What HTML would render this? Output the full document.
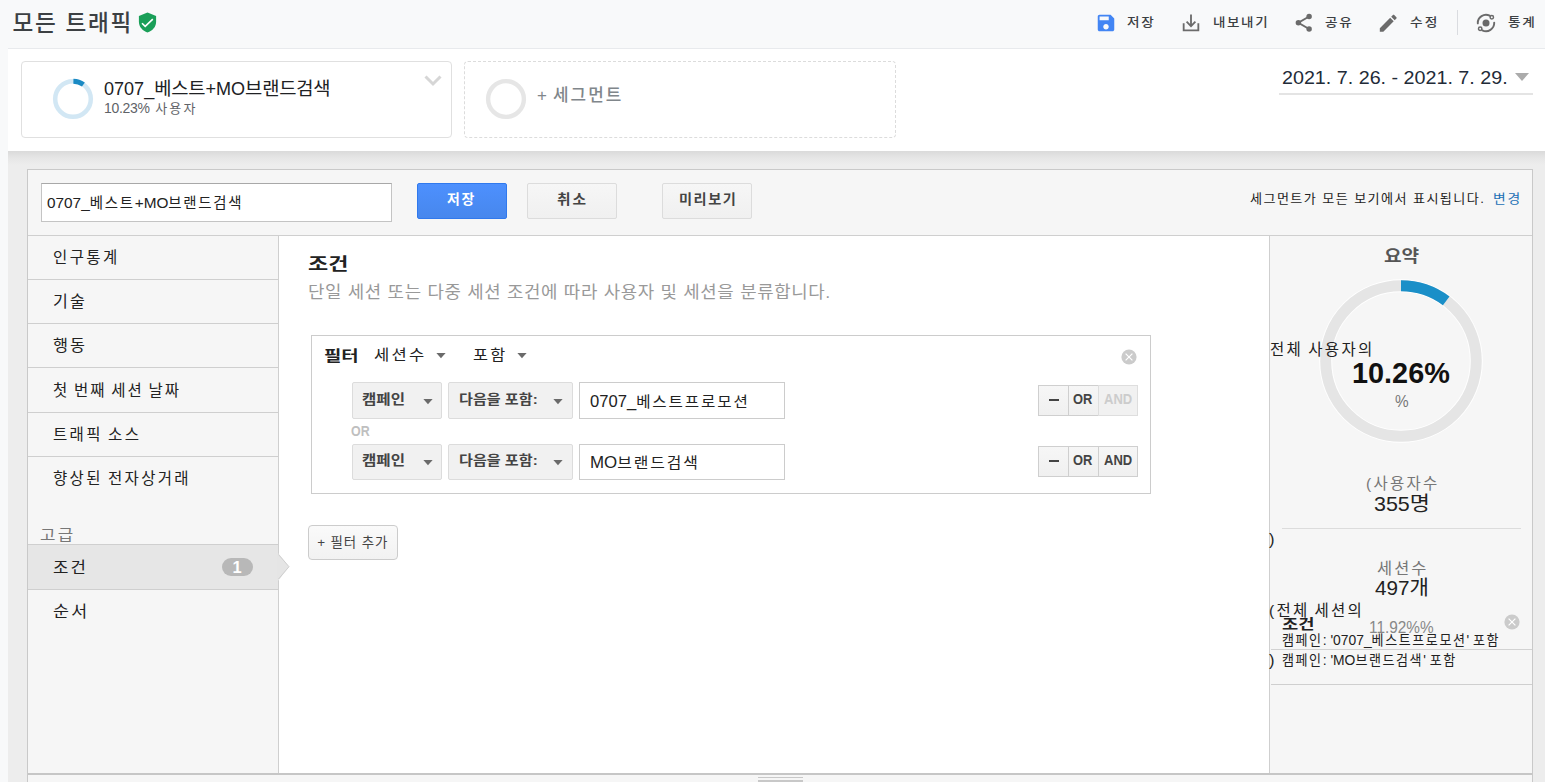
<!DOCTYPE html>
<html lang="ko">
<head>
<meta charset="utf-8">
<title>모든 트래픽</title>
<style>
*{box-sizing:border-box;margin:0;padding:0}
html,body{width:1545px;height:782px;overflow:hidden}
body{font-family:"Liberation Sans","Noto Sans CJK KR",sans-serif;background:#ededed;color:#222;position:relative;font-size:14px}
.abs{position:absolute}
.t{position:absolute;white-space:nowrap;line-height:20px;height:20px;transform-origin:0 50%}
.b{font-weight:bold}
.m{font-weight:500}
.k{font-size:.94em;letter-spacing:.12em}
.k4{font-size:1.02em;letter-spacing:.02em}
.k5{font-size:1em;letter-spacing:.05em}
.k2{font-size:1.04em;letter-spacing:-.01em}
.k3{font-size:.93em;letter-spacing:.16em;margin-left:2px}
#hdr{left:0;top:0;width:1545px;height:48px;background:#f8f9fa}
#leftstrip{left:0;top:48px;width:8px;height:734px;background:#f8f9fa}
#segbar{left:8px;top:48px;width:1537px;height:103px;background:#fff;border-top:1px solid #e8eaed}
#shadow{left:8px;top:151px;width:1537px;height:14px;background:linear-gradient(#dadada,#e6e6e6 50%,#ededed)}
#card1{left:21px;top:61px;width:431px;height:77px;border:1px solid #e0e0e0;border-radius:4px;background:#fff}
#card2{left:464px;top:61px;width:432px;height:77px;border:1px dashed #dcdcdc;border-radius:4px;background:#fff}
#panel{left:27px;top:169px;width:1506px;height:620px;border:1px solid #c9c9c9;background:#f6f6f6}
#topline{left:28px;top:235px;width:1504px;height:1px;background:#cfcfcf}
#main{left:278px;top:236px;width:992px;height:537px;background:#fff;border-left:1px solid #cfcfcf;border-right:1px solid #cfcfcf}
#botline{left:28px;top:773px;width:1504px;height:2px;background:#c6c6c6}
.nl{position:absolute;left:28px;width:250px;height:1px;background:#cfcfcf}
#navsel{left:28px;top:544px;width:250px;height:46px;background:#e6e6e6;border-top:1px solid #cfcfcf;border-bottom:1px solid #cfcfcf}
.btn{position:absolute;border:1px solid #dcdcdc;background:linear-gradient(#f6f6f6,#f0f0f0);border-radius:2px}
.inp{position:absolute;background:#fff;border:1px solid #ccc}
.hl{position:absolute;height:1px;background:#dcdcdc}
</style>
</head>
<body>
<div id="hdr" class="abs"></div>
<div id="leftstrip" class="abs"></div>
<div id="segbar" class="abs"></div>
<div id="shadow" class="abs"></div>
<div id="card1" class="abs"></div>
<div id="card2" class="abs"></div>
<div id="panel" class="abs"></div>
<div id="topline" class="abs"></div>
<div id="main" class="abs"></div>
<div id="botline" class="abs"></div>

<!-- HEADER -->
<span id="title" class="t m" style="left:12.5px;top:13.5px;font-size:22.6px;color:#3c4043;letter-spacing:1.7px">모든 트래픽</span>
<svg class="abs" style="left:137px;top:11px" width="21" height="23" viewBox="0 0 21 23"><path d="M10.500 1.600 L19.100 4.900 V10.700 C19.100 15.600 15.600 19.900 10.500 21.400 C5.400 19.900 1.900 15.600 1.900 10.700 V4.900 Z" fill="#1a9f58"/><path d="M5 12.300 L8.200 15.400 L15.800 8.200" fill="none" stroke="#fff" stroke-width="1.600"/></svg>

<svg class="abs" style="left:1095px;top:12px" width="22" height="22" viewBox="0 0 24 24"><path fill="#4285f4" d="M17 3H5c-1.11 0-2 .9-2 2v14c0 1.1.89 2 2 2h14c1.1 0 2-.9 2-2V7l-4-4zm-5 16c-1.66 0-3-1.34-3-3s1.34-3 3-3 3 1.34 3 3-1.34 3-3 3zm3-10H5V5h10v4z"/></svg>
<span id="h_save" class="t m" style="left:1127.4px;top:13.4px;font-size:12.4px;color:#3c4043;letter-spacing:1.6px;transform:scaleX(1.1)">저장</span>
<svg class="abs" style="left:1180px;top:12px" width="22" height="22" viewBox="0 0 24 24"><path fill="none" stroke="#6b6b6b" stroke-width="2" d="M4 12.400V20H20V12.400M12 2.800V15M7.200 10.600 12 15.400 16.800 10.600"/></svg>
<span id="h_export" class="t m" style="left:1213px;top:13.4px;font-size:12.4px;color:#3c4043;letter-spacing:1.5px;transform:scaleX(1.09)">내보내기</span>
<svg class="abs" style="left:1293px;top:12px" width="21.500" height="21.500" viewBox="0 0 24 24"><g fill="#6b6b6b"><circle cx="18" cy="5" r="3.050"/><circle cx="6" cy="12" r="3.050"/><circle cx="18" cy="19" r="3.050"/></g><path d="M18 5 6 12l12 7" fill="none" stroke="#6b6b6b" stroke-width="2.200"/></svg>
<span id="h_share" class="t m" style="left:1324.5px;top:13.4px;font-size:12.4px;color:#3c4043;letter-spacing:1.6px;transform:scaleX(1.1)">공유</span>
<svg class="abs" style="left:1377.400px;top:11.700px" width="22.500" height="22.500" viewBox="0 0 24 24"><path fill="#6b6b6b" d="M3 17.250V21h3.750L17.810 9.940l-3.750-3.750L3 17.250zM20.710 7.040c.39-.39.39-1.020 0-1.410l-2.340-2.340c-.39-.39-1.020-.39-1.410 0l-1.830 1.830 3.750 3.750 1.830-1.830z"/></svg>
<span id="h_edit" class="t m" style="left:1410.1px;top:13.4px;font-size:12.4px;color:#3c4043;letter-spacing:1.8px;transform:scaleX(1.11)">수정</span>
<div class="abs" style="left:1457px;top:10px;width:1px;height:25px;background:#dadce0"></div>
<svg class="abs" style="left:1475.600px;top:12.700px" width="20" height="20" viewBox="0 0 20 20"><g fill="none" stroke="#6b6b6b" stroke-width="1.900" stroke-linecap="round"><path d="M1.800 10.400A8.200 8.200 0 0 1 13.700 2.700"/><path d="M18.200 9.600A8.200 8.200 0 0 1 6.300 17.300"/></g><g fill="none" stroke="#6b6b6b" stroke-width="1.500"><circle cx="15.800" cy="4.200" r="1.700"/><circle cx="4.200" cy="15.800" r="1.700"/></g><circle cx="10" cy="10" r="3.500" fill="#6b6b6b"/></svg>
<span id="h_stat" class="t m" style="left:1507.5px;top:13.4px;font-size:12.4px;color:#3c4043;letter-spacing:1.6px;transform:scaleX(1.1)">통계</span>

<!-- SEGMENT BAR -->
<svg class="abs" style="left:52px;top:78px" width="42" height="42" viewBox="0 0 42 42"><circle cx="21" cy="21" r="17.800" fill="none" stroke="#d2e7f4" stroke-width="4.500"/><path d="M21.400 3.200A17.800 17.800 0 0 1 31.400 6.550" fill="none" stroke="#1a8ac4" stroke-width="4.900"/></svg>
<span id="seg_title" class="t" style="left:104px;top:78.8px;font-size:18px;color:#202124;transform:scaleX(1.003)">0707_<span class="k2">베스트</span>+MO<span class="k2">브랜드검색</span></span>
<span id="seg_sub" class="t" style="left:104px;top:98px;font-size:14px;color:#5f6368;letter-spacing:-0.3px;transform:scaleX(1)">10.23% <span class="k3">사용자</span></span>
<svg class="abs" style="left:423px;top:73px" width="20" height="14" viewBox="0 0 20 14"><path d="M2.500 3.500 10 11l7.500-7.500" fill="none" stroke="#d6d6d6" stroke-width="3"/></svg>
<svg class="abs" style="left:484.700px;top:78px" width="42" height="42" viewBox="0 0 42 42"><circle cx="21" cy="21" r="17.900" fill="none" stroke="#e6e6e6" stroke-width="4.400"/></svg>
<span id="seg_add" class="t m" style="word-spacing:-2.5px;left:537px;top:86px;font-size:16.92px;color:#80868b;letter-spacing:2.0px">+ 세그먼트</span>
<span id="date" class="t" style="left:1282px;top:67.6px;font-size:19px;color:#222b38;transform:scaleX(1.037)">2021. 7. 26. - 2021. 7. 29.</span>
<svg class="abs" style="left:1514px;top:72px" width="16" height="10" viewBox="0 0 16 10"><path d="M1 1h14L8 9z" fill="#ababab"/></svg>
<div class="abs" style="left:1279px;top:93px;width:254px;height:2px;background:#e4e4e4"></div>

<!-- TOP BAR -->
<div class="inp" style="left:41px;top:183px;width:351px;height:39px;border-color:#a8a8a8 #c4c4c4 #c4c4c4 #c4c4c4"></div>
<span id="in_name" class="t" style="left:47px;top:193px;font-size:15.500px;color:#222;transform:scaleX(0.99)">0707_<span class="k">베스트</span>+MO<span class="k">브랜드검색</span></span>
<div class="btn" style="left:417px;top:183px;width:90px;height:36px;background:linear-gradient(#4d90fe,#4787ed);border-color:#3079ed"></div>
<span id="btn_save" class="t b" style="left:447px;top:190px;font-size:13.16px;color:#fff;letter-spacing:1.68px;transform:scaleX(1.06)">저장</span>
<div class="btn" style="left:527px;top:183px;width:90px;height:36px"></div>
<span id="btn_cancel" class="t b" style="left:557px;top:190px;font-size:13.16px;color:#444;letter-spacing:1.68px;transform:scaleX(1.12)">취소</span>
<div class="btn" style="left:662px;top:183px;width:90px;height:36px"></div>
<span id="btn_prev" class="t b" style="left:679px;top:190px;font-size:13.16px;color:#444;transform:scaleX(1.08);letter-spacing:1.4px">미리보기</span>
<span id="top_msg" class="t" style="left:1249.9px;top:189.4px;font-size:12.6px;color:#222;letter-spacing:1.34px;transform:scaleX(1.04)">세그먼트가 모든 보기에서 표시됩니다.</span>
<span id="top_link" class="t" style="left:1493px;top:189.4px;font-size:12.6px;color:#1a6fb5;letter-spacing:1.68px;transform:scaleX(1.1)">변경</span>

<!-- NAV -->
<div class="nl" style="top:279px"></div>
<div class="nl" style="top:323px"></div>
<div class="nl" style="top:367px"></div>
<div class="nl" style="top:412px"></div>
<div class="nl" style="top:456px"></div>
<div id="navsel" class="abs"></div>
<svg class="abs" style="left:277px;top:553px" width="14" height="28" viewBox="0 0 14 28"><path d="M0 0.500h1.500l10.500 13.200L1.500 27.500H0z" fill="#e5e5e5"/><path d="M1.500 1.500 12 13.700 1.500 26" fill="none" stroke="#cfcfcf" stroke-width="1"/></svg>
<span id="nav1" class="t" style="left:53px;top:248px;font-size:15.51px;letter-spacing:2.4px">인구통계</span>
<span id="nav2" class="t" style="left:53px;top:292px;font-size:15.51px;letter-spacing:1.98px;transform:scaleX(1.04)">기술</span>
<span id="nav3" class="t" style="left:53px;top:336px;font-size:15.51px;letter-spacing:1.98px;transform:scaleX(1.05)">행동</span>
<span id="nav4" class="t" style="word-spacing:-1.5px;left:53px;top:381px;font-size:15.51px;letter-spacing:1.98px">첫 번째 세션 날짜</span>
<span id="nav5" class="t" style="word-spacing:-1.500px;left:53px;top:425px;font-size:15.51px;letter-spacing:2.36px">트래픽 소스</span>
<span id="nav6" class="t" style="word-spacing:-1.500px;left:53px;top:469px;font-size:15.51px;letter-spacing:2.34px">향상된 전자상거래</span>
<span id="nav_adv" class="t" style="left:40px;top:524.8px;font-size:15.04px;color:#777;letter-spacing:1.92px;transform:scaleX(1.12)">고급</span>
<span id="nav_cond" class="t" style="left:52.5px;top:557.7px;font-size:15.51px;letter-spacing:1.98px;transform:scaleX(1.08)">조건</span>
<div class="abs" style="left:222px;top:558px;width:31px;height:18px;border-radius:9px;background:#b8b8b8"></div>
<span id="nav_badge" class="t b" style="left:232.500px;top:557px;font-size:16.500px;color:#fff">1</span>
<span id="nav_seq" class="t" style="left:52.5px;top:601.5px;font-size:15.51px;letter-spacing:1.98px;transform:scaleX(1.12)">순서</span>

<!-- MAIN -->
<span id="main_title" class="t b" style="left:308px;top:255px;font-size:17px;color:#222;transform:scaleX(1.29)">조건</span>
<span id="main_sub" class="t" style="word-spacing:0.2px;left:307.5px;top:282.8px;font-size:16.54px;color:#999;transform:scaleX(1.08);letter-spacing:0.55px">단일 세션 또는 다중 세션 조건에 따라 사용자 및 세션을 분류합니다.</span>
<div class="abs" style="left:311px;top:335px;width:840px;height:159px;border:1px solid #ccc;background:#fff"></div>
<span id="f_label" class="t b" style="left:324.2px;top:345.7px;font-size:15.2px;color:#222;transform:scaleX(1.24)">필터</span>
<span id="f_sess" class="t" style="left:374px;top:345px;font-size:14.8px;color:#222;letter-spacing:1.98px;transform:scaleX(1.12)">세션수</span>
<svg class="abs" style="left:436px;top:353px" width="10" height="6" viewBox="0 0 10 6"><path d="M0.400 0h9.200L5 5.300z" fill="#6a6a6a"/></svg>
<span id="f_incl" class="t" style="left:473px;top:345px;font-size:14.8px;color:#222;letter-spacing:1.98px;transform:scaleX(1.1)">포함</span>
<svg class="abs" style="left:517px;top:353px" width="10" height="6" viewBox="0 0 10 6"><path d="M0.400 0h9.200L5 5.300z" fill="#6a6a6a"/></svg>
<svg class="abs" style="left:1120px;top:347.800px" width="18" height="18" viewBox="0 0 18 18"><circle cx="9" cy="9" r="7.600" fill="#cbcbcb"/><path d="M5.600 5.600l6.800 6.800M12.400 5.600l-6.800 6.800" stroke="#fff" stroke-width="1.200"/></svg>

<div class="btn" style="left:352px;top:382px;width:90px;height:37px;background:#f1f1f1"></div>
<span id="r1_camp" class="t b" style="left:362.1px;top:389.5px;font-size:13.2px;color:#444;transform:scaleX(1.18)">캠페인</span>
<svg class="abs" style="left:423px;top:399px" width="10" height="6" viewBox="0 0 10 6"><path d="M0.400 0h9.200L5 5.300z" fill="#6a6a6a"/></svg>
<div class="btn" style="left:448px;top:382px;width:125px;height:37px;background:#f1f1f1"></div>
<span id="r1_cont" class="t b" style="left:458.5px;top:389.5px;font-size:13.2px;color:#444;transform:scaleX(1.145)">다음을 포함:</span>
<svg class="abs" style="left:553px;top:399px" width="10" height="6" viewBox="0 0 10 6"><path d="M0.400 0h9.200L5 5.300z" fill="#6a6a6a"/></svg>
<div class="inp" style="left:579px;top:382px;width:206px;height:37px"></div>
<span id="r1_val" class="t" style="left:590.1px;top:392px;font-size:16px;color:#222;transform:scaleX(1.037)">0707_<span class="k">베스트프로모션</span></span>
<span id="or_lbl" class="t b" style="left:351.4px;top:421px;font-size:14.3px;color:#bfbfbf;transform:scaleX(0.87)">OR</span>

<div class="btn" style="left:352px;top:444px;width:90px;height:36px;background:#f1f1f1"></div>
<span id="r2_camp" class="t b" style="left:362.1px;top:450.5px;font-size:13.2px;color:#444;transform:scaleX(1.18)">캠페인</span>
<svg class="abs" style="left:423px;top:460px" width="10" height="6" viewBox="0 0 10 6"><path d="M0.400 0h9.200L5 5.300z" fill="#6a6a6a"/></svg>
<div class="btn" style="left:448px;top:444px;width:125px;height:36px;background:#f1f1f1"></div>
<span id="r2_cont" class="t b" style="left:458.5px;top:450.5px;font-size:13.2px;color:#444;transform:scaleX(1.145)">다음을 포함:</span>
<svg class="abs" style="left:553px;top:460px" width="10" height="6" viewBox="0 0 10 6"><path d="M0.400 0h9.200L5 5.300z" fill="#6a6a6a"/></svg>
<div class="inp" style="left:579px;top:444px;width:206px;height:36px"></div>
<span id="r2_val" class="t" style="left:589.6px;top:453px;font-size:16px;color:#222;transform:scaleX(1.056)">MO<span class="k">브랜드검색</span></span>

<div class="btn" style="left:1038px;top:385px;width:31px;height:31px;border-radius:0;border-color:#cfcfcf"></div>
<div class="btn" style="left:1068px;top:385px;width:31px;height:31px;border-radius:0;border-color:#cfcfcf"></div>
<div class="btn" style="left:1098px;top:385px;width:40px;height:31px;border-radius:0;background:#f1f1f1;border-color:#dedede"></div>
<div class="abs" style="left:1049px;top:399px;width:10px;height:2px;background:#444"></div>
<span id="b_or" class="t b" style="left:1073.3px;top:389px;font-size:14.300px;color:#444;transform:scaleX(0.9)">OR</span>
<span id="b_and" class="t b" style="left:1104px;top:389px;font-size:14.300px;color:#ccc;transform:scaleX(0.91)">AND</span>
<div class="btn" style="left:1038px;top:446px;width:31px;height:31px;border-radius:0;border-color:#cfcfcf"></div>
<div class="btn" style="left:1068px;top:446px;width:31px;height:31px;border-radius:0;border-color:#cfcfcf"></div>
<div class="btn" style="left:1098px;top:446px;width:40px;height:31px;border-radius:0;border-color:#cfcfcf"></div>
<div class="abs" style="left:1049px;top:460px;width:10px;height:2px;background:#444"></div>
<span id="b_or2" class="t b" style="left:1073.3px;top:450px;font-size:14.300px;color:#444;transform:scaleX(0.9)">OR</span>
<span id="b_and2" class="t b" style="left:1104px;top:450px;font-size:14.300px;color:#444;transform:scaleX(0.91)">AND</span>

<div class="btn" style="left:308px;top:525px;width:90px;height:35px;border-color:#ccc;border-radius:4px;background:linear-gradient(#fafafa,#f2f2f2)"></div>
<span id="addf" class="t" style="left:317.2px;top:532.7px;font-size:13.44px;color:#444;letter-spacing:0.9px">+ 필터 추가</span>

<!-- SUMMARY -->
<span id="s_title" class="t b" style="left:1384.2px;top:245.5px;font-size:16.5px;color:#555;transform:scaleX(1.16)">요약</span>
<svg class="abs" style="left:1319px;top:279px" width="164" height="164" viewBox="0 0 164 164"><circle cx="82" cy="82" r="75.300" fill="none" stroke="#fff" stroke-width="13"/><circle cx="82" cy="82" r="75.300" fill="none" stroke="#e5e5e5" stroke-width="11"/><path d="M82 6.700A75.300 75.300 0 0 1 127.200 21.800" fill="none" stroke="#1a8fc8" stroke-width="11"/></svg>
<span id="s_all" class="t" style="word-spacing:-1.500px;left:1270px;top:339.7px;font-size:15.51px;color:#222;letter-spacing:2.31px">전체 사용자의</span>
<span id="s_pct" class="t b" style="left:1352.3px;top:363px;font-size:29.7px;color:#111;transform:scaleX(0.972)">10.26%</span>
<span id="s_pct2" class="t" style="left:1395px;top:391px;font-size:16.500px;color:#777;transform:scaleX(0.93)">%</span>
<span id="s_users_lbl" class="t" style="left:1366px;top:473.5px;font-size:15.51px;color:#777;letter-spacing:2.28px">(사용자수</span>
<span id="s_users" class="t" style="left:1374.2px;top:493.5px;font-size:19.800px;color:#222;transform:scaleX(1.085)">355<span class="k4">명</span></span>
<div class="hl" style="left:1282px;top:528px;width:239px"></div>
<span id="s_p1" class="t" style="left:1269px;top:529px;font-size:16.500px;color:#222">)</span>
<span id="s_sess_lbl" class="t" style="left:1377px;top:558.5px;font-size:15.51px;color:#777;letter-spacing:1.98px;transform:scaleX(1.058)">세션수</span>
<span id="s_sess" class="t" style="left:1375px;top:577.5px;font-size:19.800px;color:#222;transform:scaleX(1.045)">497<span class="k4">개</span></span>
<span id="s_allsess" class="t" style="word-spacing:-1.500px;left:1269px;top:600.8px;font-size:15.51px;color:#222;letter-spacing:2.23px">(전체 세션의</span>
<span id="s_1192" class="t" style="left:1369px;top:618px;font-size:16px;color:#888;transform:scaleX(0.96)">11.92%%</span>
<span id="s_cond" class="t b" style="left:1282px;top:613.5px;font-size:14px;color:#222;transform:scaleX(1.26)">조건</span>
<svg class="abs" style="left:1503.200px;top:613px" width="18" height="18" viewBox="0 0 18 18"><circle cx="9" cy="9" r="7.600" fill="#cbcbcb"/><path d="M5.600 5.600l6.800 6.800M12.400 5.600l-6.800 6.800" stroke="#fff" stroke-width="1.200"/></svg>
<span id="s_c1" class="t" style="left:1282px;top:630px;font-size:14.300px;color:#222;transform:scaleX(0.97)"><span class="k">캠페인</span>: '0707_<span class="k">베스트프로모션</span>' <span class="k">포함</span></span>
<div class="hl" style="left:1271px;top:649px;width:261px;background:#d2d2d2"></div>
<span id="s_p2" class="t" style="left:1269px;top:650px;font-size:16.500px;color:#222">)</span>
<span id="s_c2" class="t" style="left:1282px;top:650px;font-size:14.300px;color:#222;transform:scaleX(0.97)"><span class="k">캠페인</span>: 'MO<span class="k">브랜드검색</span>' <span class="k">포함</span></span>
<div class="hl" style="left:1271px;top:684px;width:261px;background:#cfcfcf"></div>

<!-- BOTTOM HANDLE -->
<div class="abs" style="left:758px;top:777px;width:45px;height:1px;background:#c8c8c8"></div>
<div class="abs" style="left:758px;top:780px;width:45px;height:2px;background:#c8c8c8"></div>
</body>
</html>
